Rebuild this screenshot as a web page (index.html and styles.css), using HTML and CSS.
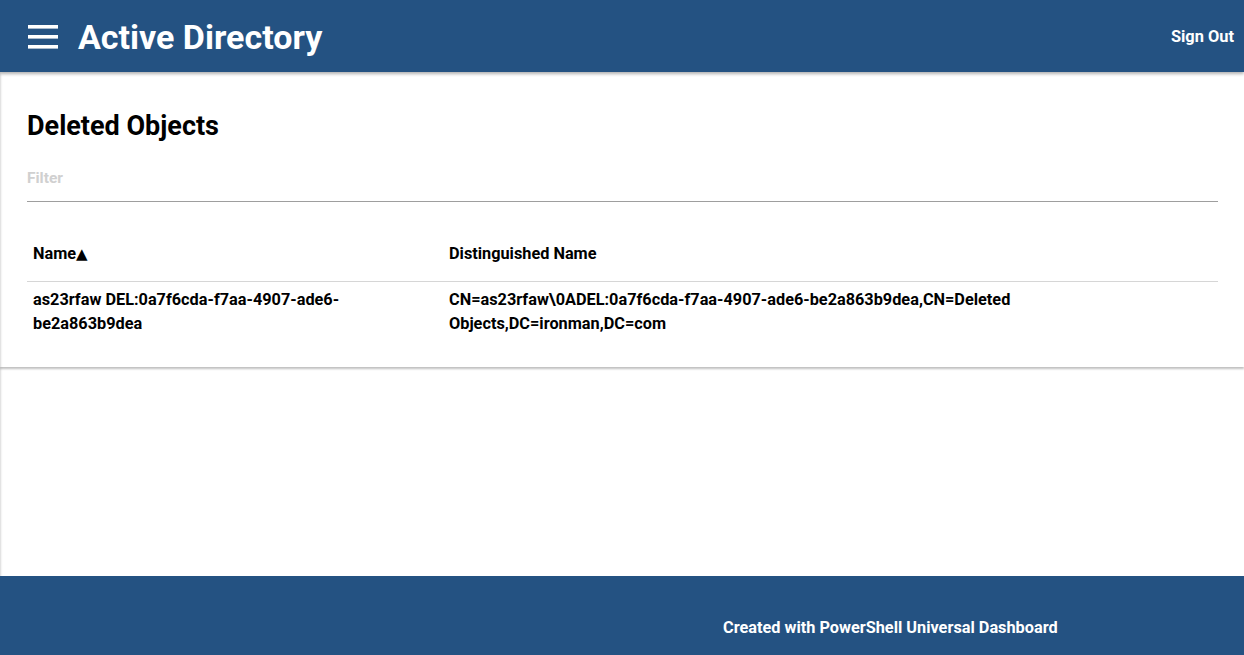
FILE: index.html
```html
<!DOCTYPE html>
<html>
<head>
<meta charset="utf-8">
<link rel="stylesheet" href="styles.css">
</head>
<body>
<div class="page">
  <header class="topbar">
    <div class="brand">
      <svg class="menu-icon" width="30" height="24" viewBox="0 0 30 24"><rect x="0" y="0" width="30" height="3.6" fill="#fff"/><rect x="0" y="10" width="30" height="3.6" fill="#fff"/><rect x="0" y="20" width="30" height="3.6" fill="#fff"/></svg>
      <span class="title">Active Directory</span>
    </div>
    <a class="signout">Sign Out</a>
  </header>
  <main class="content">
    <section class="card">
      <h2 class="card-title">Deleted Objects</h2>
      <div class="filter">
        <span class="filter-label">Filter</span>
      </div>
      <table class="grid">
        <thead>
          <tr><th class="col-name">Name<span class="sort">▲</span></th><th>Distinguished Name</th></tr>
        </thead>
        <tbody>
          <tr><td class="col-name">as23rfaw DEL:0a7f6cda-f7aa-4907-ade6-be2a863b9dea</td><td class="col-dn">CN=as23rfaw\0ADEL:0a7f6cda-f7aa-4907-ade6-be2a863b9dea,CN=Deleted Objects,DC=ironman,DC=com</td></tr>
        </tbody>
      </table>
    </section>
  </main>
  <footer class="footer">
    <span class="footer-text">Created with PowerShell Universal Dashboard</span>
  </footer>
</div>
</body>
</html>
```
FILE: styles.css
```css
html, body {
  margin: 0;
  padding: 0;
}
body {
  font-family: Roboto, "Liberation Sans", sans-serif;
  color: #000;
  background: #fff;
}
.page {
  min-height: 655px;
  display: flex;
  flex-direction: column;
  box-shadow: inset 2px 0 2px -1px rgba(0,0,0,0.15);
}
.topbar {
  height: 72px;
  background: #245282;
  display: flex;
  align-items: center;
  justify-content: space-between;
  padding: 0 10px 0 28px;
  box-shadow: 0 2px 3px rgba(0,0,0,0.3);
  position: relative;
  z-index: 2;
}
.brand {
  display: flex;
  align-items: center;
}
.menu-icon {
  display: block;
  margin-top: 1px;
}
.title {
  color: #fff;
  font-weight: 700;
  font-size: 34px;
  margin-left: 20px;
  margin-top: 2px;
}
.signout {
  color: #fff;
  font-weight: 700;
  font-size: 16.4px;
}
.content {
  flex: 1;
  padding-top: 2px;
}
.card {
  padding: 36px 26px 20px 27px;
  box-shadow: 0 2px 2px rgba(0,0,0,0.25);
  height: 237px;
}
.card-title {
  margin: 0;
  font-size: 27px;
  font-weight: 700;
  line-height: 32px;
}
.filter {
  margin-top: 20px;
  border-bottom: 1px solid #9e9e9e;
  height: 40px;
  box-sizing: border-box;
  padding-top: 6px;
}
.filter-label {
  color: #d0d0d0;
  font-weight: 700;
  font-size: 15.5px;
}
.grid {
  width: 100%;
  border-collapse: collapse;
  margin-top: 24px;
  font-size: 16.3px;
  font-weight: 700;
}
.grid th {
  text-align: left;
  padding: 13px 6px 12px;
  line-height: 30px;
  border-bottom: 1px solid #d6d6d6;
}
.sort {
  font-family: "DejaVu Sans", sans-serif;
  font-size: 15px;
}
.grid td {
  padding: 6px 6px;
  line-height: 24px;
  vertical-align: top;
}
.col-name {
  width: 404px;
}
.col-dn {
  padding-right: 190px !important;
}
.footer {
  height: 79px;
  background: #245282;
  display: flex;
  justify-content: flex-start;
  padding-left: 723px;
  align-items: flex-start;
}
.footer-text {
  color: #fff;
  font-weight: 700;
  font-size: 16.3px;
  margin-top: 42px;
}
```
